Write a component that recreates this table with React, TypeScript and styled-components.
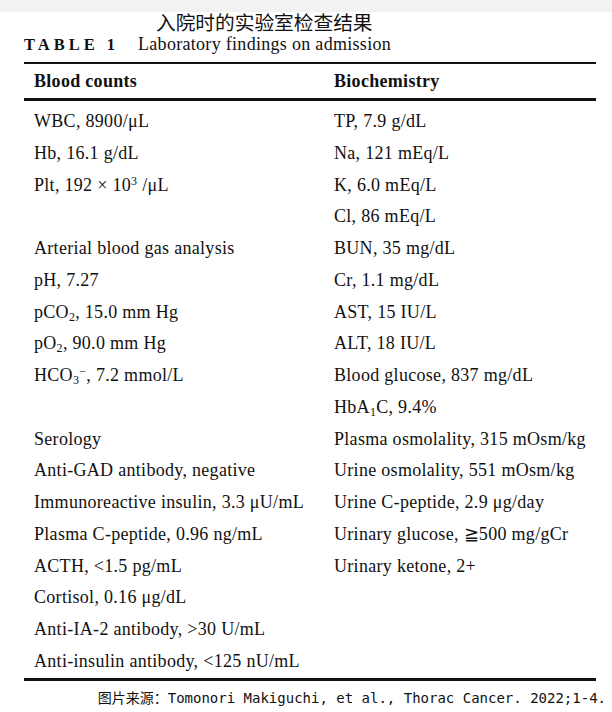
import React from "react";
import styled, { createGlobalStyle } from "styled-components";

const GlobalStyle = createGlobalStyle`
  html, body {
    margin: 0;
    padding: 0;
    background: #ffffff;
  }
  body {
    width: 612px;
    height: 712px;
    overflow: hidden;
    font-family: "Liberation Serif", "Times New Roman", serif;
    color: #111111;
  }
`;

const Page = styled.div`
  width: 612px;
  height: 712px;
  display: flex;
  flex-direction: column;
`;

const TopBand = styled.div`
  height: 12px;
  background: #f2f2f2;
`;

const CnTitle = styled.div`
  padding-left: 156px;
  font-family: "Noto Sans CJK SC", "Noto Sans", sans-serif;
  font-size: 19.7px;
  line-height: 20px;
  color: #111;
`;

const Caption = styled.div`
  display: flex;
  align-items: baseline;
  padding-left: 24px;
  height: 30px;
  line-height: 24px;
`;

const CaptionLabel = styled.span`
  font-weight: bold;
  font-size: 16.5px;
  letter-spacing: 4px;
  width: 114px;
`;

const CaptionText = styled.span`
  font-size: 18px;
  letter-spacing: 0.3px;
`;

const Table = styled.div`
  margin: 0 16px 0 24px;
  border-top: 2px solid #111;
  border-bottom: 3px solid #111;
`;

const HeadRow = styled.div`
  display: grid;
  grid-template-columns: 300px 1fr;
  height: 34px;
  align-items: center;
  border-bottom: 3px solid #111;
`;

const HeadCell = styled.div`
  padding-left: 10px;
  font-weight: bold;
  font-size: 18px;
  letter-spacing: 0.3px;
`;

const Body = styled.div`
  display: grid;
  grid-template-columns: 300px 1fr;
  grid-auto-rows: 31.76px;
  padding-top: 5px;
`;

const Cell = styled.div`
  padding-left: 10px;
  font-size: 18px;
  letter-spacing: 0.3px;
  line-height: 31.76px;
  white-space: nowrap;
`;

const Sub = styled.sub`
  font-size: 12px;
  vertical-align: -3px;
  line-height: 0;
`;

const Sup = styled.sup`
  font-size: 12px;
  vertical-align: 6px;
  line-height: 0;
`;

const Footer = styled.div`
  display: flex;
  justify-content: flex-end;
  padding: 8px 6px 0 0;
  font-family: "DejaVu Sans Mono", "Noto Sans CJK SC", monospace;
  font-size: 14px;
  line-height: 18px;
  color: #111;
`;

const left: React.ReactNode[] = [
  "WBC, 8900/μL",
  "Hb, 16.1 g/dL",
  <>
    Plt, 192 × 10<Sup>3</Sup> /μL
  </>,
  "",
  "Arterial blood gas analysis",
  "pH, 7.27",
  <>
    pCO<Sub>2</Sub>, 15.0 mm Hg
  </>,
  <>
    pO<Sub>2</Sub>, 90.0 mm Hg
  </>,
  <>
    HCO<Sub>3</Sub>
    <Sup>−</Sup>, 7.2 mmol/L
  </>,
  "",
  "Serology",
  "Anti-GAD antibody, negative",
  "Immunoreactive insulin, 3.3 μU/mL",
  "Plasma C-peptide, 0.96 ng/mL",
  "ACTH, <1.5 pg/mL",
  "Cortisol, 0.16 μg/dL",
  "Anti-IA-2 antibody, >30 U/mL",
  "Anti-insulin antibody, <125 nU/mL",
];

const right: React.ReactNode[] = [
  "TP, 7.9 g/dL",
  "Na, 121 mEq/L",
  "K, 6.0 mEq/L",
  "Cl, 86 mEq/L",
  "BUN, 35 mg/dL",
  "Cr, 1.1 mg/dL",
  "AST, 15 IU/L",
  "ALT, 18 IU/L",
  "Blood glucose, 837 mg/dL",
  <>
    HbA<Sub>1</Sub>C, 9.4%
  </>,
  "Plasma osmolality, 315 mOsm/kg",
  "Urine osmolality, 551 mOsm/kg",
  "Urine C-peptide, 2.9 μg/day",
  "Urinary glucose, ≧500 mg/gCr",
  "Urinary ketone, 2+",
  "",
  "",
  "",
];

function App() {
  return (
    <Page>
      <GlobalStyle />
      <TopBand />
      <CnTitle>入院时的实验室检查结果</CnTitle>
      <Caption>
        <CaptionLabel>TABLE 1</CaptionLabel>
        <CaptionText>Laboratory findings on admission</CaptionText>
      </Caption>
      <Table>
        <HeadRow>
          <HeadCell>Blood counts</HeadCell>
          <HeadCell>Biochemistry</HeadCell>
        </HeadRow>
        <Body>
          {left.map((l, i) => (
            <React.Fragment key={i}>
              <Cell>{l}</Cell>
              <Cell>{right[i]}</Cell>
            </React.Fragment>
          ))}
        </Body>
      </Table>
      <Footer>图片来源：Tomonori Makiguchi, et al., Thorac Cancer. 2022;1-4.</Footer>
    </Page>
  );
}

export default App;
